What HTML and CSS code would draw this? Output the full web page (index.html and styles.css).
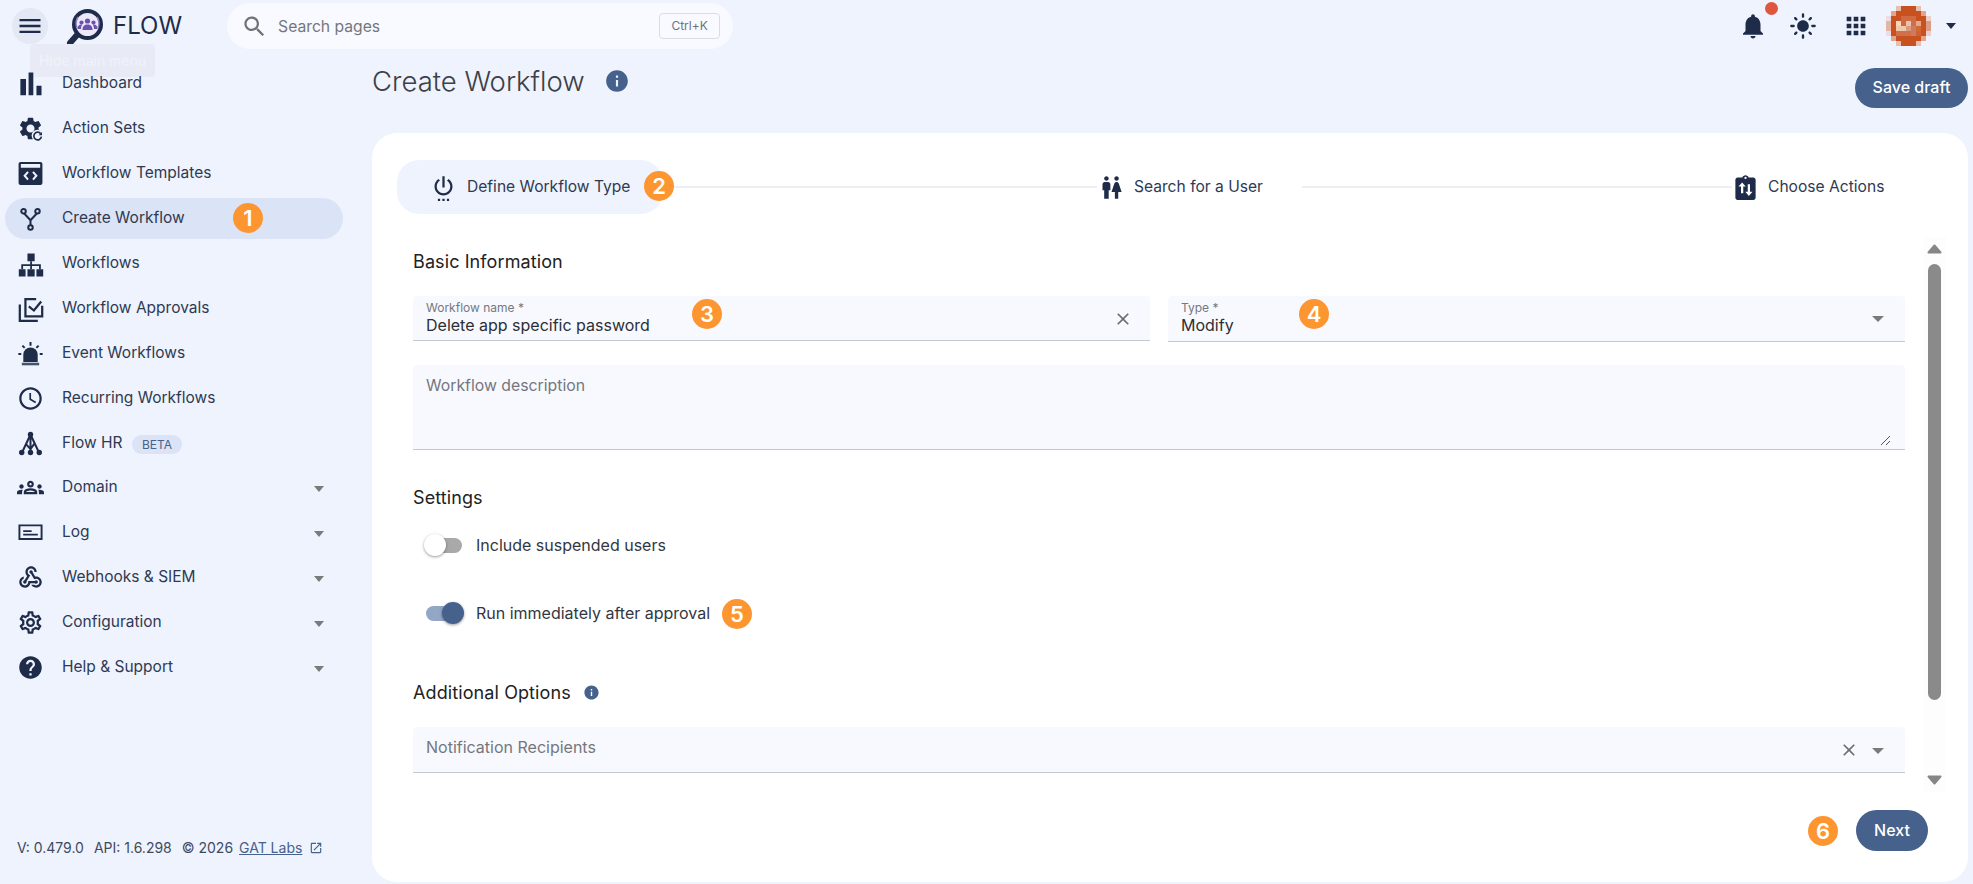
FILE: index.html
```html
<!DOCTYPE html>
<html lang="en">
<head>
<meta charset="utf-8">
<title>Create Workflow</title>
<link rel="stylesheet" href="styles.css">
</head>
<body>
<header class="topbar">
  <button class="menu-btn"><svg class="ic28" viewBox="0 0 24 24"><path d="M3 18h18v-2H3v2zm0-5h18v-2H3v2zm0-7v2h18V6H3z"/></svg></button>
  <div class="tooltip">Hide main menu</div>
  <svg class="logo" viewBox="0 0 44 44">
    <circle cx="23.5" cy="22.5" r="13.5" fill="#ece8f8" stroke="#1f2c49" stroke-width="4"/>
    <path d="M13 33l-7 8" stroke="#1f2c49" stroke-width="6" stroke-linecap="round" fill="none"/>
    <g fill="#6a52ad"><circle cx="23.5" cy="19" r="2.6"/><circle cx="17.5" cy="20.5" r="2.1"/><circle cx="29.5" cy="20.5" r="2.1"/><path d="M18.5 28c0-4 2-5.500 5-5.500s5 1.500 5 5.500z"/><path d="M13.500 27c0-3 1.500-4.500 3.500-4.500.6 0 1 .1 1.300.3-.8 1-1.300 2.400-1.300 4.200zM33.500 27c0-3-1.500-4.500-3.500-4.500-.6 0-1 .1-1.300.3.800 1 1.300 2.400 1.300 4.200z"/></g>
    <path d="M14 15a12 12 0 0 0-1 11M33 15a12 12 0 0 1 1 11" stroke="#8f7cc8" stroke-width="1.500" fill="none"/>
  </svg>
  <span class="brand">FLOW</span>
  <div class="search">
    <svg class="ic27 grey" viewBox="0 0 24 24"><path d="M15.5 14h-.79l-.28-.27C15.41 12.59 16 11.11 16 9.500 16 5.910 13.090 3 9.500 3S3 5.910 3 9.500 5.910 16 9.500 16c1.610 0 3.090-.59 4.230-1.570l.27.28v.79l5 4.990L20.490 19l-4.990-5zm-6 0C7.010 14 5 11.990 5 9.500S7.010 5 9.500 5 14 7.010 14 9.500 11.990 14 9.500 14z"/></svg>
    <span class="search-text">Search pages</span>
    <kbd class="kbd">Ctrl+K</kbd>
  </div>
  <div class="top-actions">
    <span class="bell">
      <svg class="ic30" viewBox="0 0 24 24"><path d="M12 22c1.100 0 2-.9 2-2h-4c0 1.100.9 2 2 2zm6-6v-5c0-3.070-1.640-5.640-4.500-6.320V4c0-.83-.67-1.500-1.500-1.500s-1.500.67-1.500 1.500v.68C7.630 5.360 6 7.920 6 11v5l-2 2v1h16v-1l-2-2z"/></svg>
      <i class="dot"></i>
    </span>
    <svg class="ic28 sun" viewBox="0 0 24 24"><path d="M12 7c-2.760 0-5 2.240-5 5s2.240 5 5 5 5-2.240 5-5-2.240-5-5-5zM2 13h2c.55 0 1-.45 1-1s-.45-1-1-1H2c-.55 0-1 .45-1 1s.45 1 1 1zm18 0h2c.55 0 1-.45 1-1s-.45-1-1-1h-2c-.55 0-1 .45-1 1s.45 1 1 1zM11 2v2c0 .55.45 1 1 1s1-.45 1-1V2c0-.55-.45-1-1-1s-1 .45-1 1zm0 18v2c0 .55.45 1 1 1s1-.45 1-1v-2c0-.55-.45-1-1-1s-1 .45-1 1zM5.990 4.580c-.39-.39-1.030-.39-1.410 0-.39.39-.39 1.030 0 1.410l1.060 1.060c.39.39 1.030.39 1.410 0s.39-1.030 0-1.410L5.990 4.580zm12.370 12.370c-.39-.39-1.030-.39-1.410 0-.39.39-.39 1.030 0 1.410l1.060 1.060c.39.39 1.030.39 1.410 0 .39-.39.39-1.030 0-1.410l-1.060-1.060zm1.060-10.960c.39-.39.39-1.030 0-1.410-.39-.39-1.030-.39-1.410 0l-1.060 1.060c-.39.39-.39 1.030 0 1.410s1.030.39 1.410 0l1.060-1.060zM7.050 18.360c.39-.39.39-1.030 0-1.410-.39-.39-1.030-.39-1.410 0l-1.060 1.060c-.39.39-.39 1.030 0 1.410s1.030.39 1.410 0l1.060-1.060z"/></svg>
    <svg class="ic28 apps" viewBox="0 0 24 24"><path d="M4 8h4V4H4v4zm6 12h4v-4h-4v4zm-6 0h4v-4H4v4zm0-6h4v-4H4v4zm6 0h4v-4h-4v4zm6-10v4h4V4h-4zm-6 4h4V4h-4v4zm6 6h4v-4h-4v4zm0 6h4v-4h-4v4z"/></svg>
    <svg class="avatar" viewBox="0 0 9 8" shape-rendering="crispEdges">
      <g fill="#c8511f">
        <rect x="3" y="0" width="3" height="1"/><rect x="2" y="1" width="5" height="1"/><rect x="1" y="2" width="7" height="1"/><rect x="1" y="3" width="7" height="1"/><rect x="1" y="4" width="7" height="1"/><rect x="1" y="5" width="7" height="1"/><rect x="2" y="6" width="5" height="1"/><rect x="3" y="7" width="3" height="1"/>
      </g>
      <rect x="2" y="0" width="1" height="1" fill="#e6bfb0"/><rect x="6" y="0" width="1" height="1" fill="#e6bfb0"/>
      <rect x="1" y="1" width="1" height="1" fill="#e0a58c"/><rect x="7" y="1" width="1" height="1" fill="#e0a58c"/>
      <rect x="0" y="2" width="1" height="1" fill="#ecdde4"/><rect x="8" y="2" width="1" height="1" fill="#ebcfcb"/>
      <rect x="0" y="3" width="1" height="2" fill="#e5b5a5"/><rect x="8" y="3" width="1" height="2" fill="#dc9c84"/>
      <rect x="0" y="5" width="1" height="1" fill="#ecdde4"/><rect x="8" y="5" width="1" height="1" fill="#ebcfcb"/>
      <rect x="1" y="6" width="1" height="1" fill="#e0a58c"/><rect x="7" y="6" width="1" height="1" fill="#e0a58c"/>
      <rect x="2" y="7" width="1" height="1" fill="#e6bfb0"/><rect x="6" y="7" width="1" height="1" fill="#e6bfb0"/>
      <rect x="3" y="2" width="3" height="1" fill="#cf6a42"/>
      <rect x="2" y="3" width="1" height="1" fill="#f3d6c4"/><rect x="3" y="3" width="1" height="1" fill="#ca6a40"/><rect x="4" y="3" width="1" height="1" fill="#edc2ac"/><rect x="5" y="3" width="1" height="1" fill="#c87050"/><rect x="6" y="3" width="1" height="1" fill="#e2a78e"/>
      <rect x="2" y="4" width="1" height="1" fill="#f0c8a8"/><rect x="3" y="4" width="1" height="1" fill="#eec8ae"/><rect x="4" y="4" width="1" height="1" fill="#dc9a7c"/><rect x="5" y="4" width="1" height="1" fill="#cf7a60"/><rect x="6" y="4" width="1" height="1" fill="#cf6a30"/>
      <rect x="2" y="5" width="3" height="1" fill="#d0704a"/><rect x="5" y="5" width="1" height="1" fill="#cf7a60"/><rect x="6" y="5" width="1" height="1" fill="#cc6238"/>
    </svg>
    <i class="caret-dark"></i>
  </div>
</header>

<div class="layout">
  <aside class="sidebar">
    <nav class="nav">
      <a class="nav-item"><svg class="nav-ic" viewBox="0 0 24 24"><path d="M3 8h5v14.500H3zM10.300 2.200h4.200v20.300h-4.200zM17.300 14h4.500v8.500h-4.500z"/></svg><span>Dashboard</span></a>
      <a class="nav-item"><svg class="nav-ic" viewBox="0 0 24 24"><path d="M19.140 12.940c.04-.3.06-.61.06-.94 0-.32-.02-.64-.07-.94l2.030-1.580c.18-.14.23-.41.12-.61l-1.920-3.320c-.12-.22-.37-.29-.59-.22l-2.390.96c-.5-.38-1.030-.7-1.620-.94l-.36-2.540c-.04-.24-.24-.41-.48-.41h-3.840c-.24 0-.43.17-.47.41l-.36 2.540c-.59.24-1.130.57-1.620.94l-2.390-.96c-.22-.08-.47 0-.59.22L2.740 8.870c-.12.21-.08.47.12.61l2.030 1.580c-.05.3-.09.63-.09.94s.02.64.07.94l-2.030 1.580c-.18.14-.23.41-.12.61l1.920 3.320c.12.22.37.29.59.22l2.390-.96c.5.38 1.030.7 1.620.94l.36 2.540c.05.24.24.41.48.41h3.840c.24 0 .44-.17.47-.41l.36-2.540c.59-.24 1.130-.56 1.620-.94l2.390.96c.22.08.47 0 .59-.22l1.920-3.320c.12-.22.07-.47-.12-.61l-2.010-1.580zM12 15.600c-1.980 0-3.600-1.620-3.600-3.600s1.620-3.600 3.600-3.600 3.600 1.620 3.600 3.600-1.620 3.600-3.600 3.600z"/><circle cx="18.200" cy="18.200" r="5.200" fill="#eef3fe"/><path d="M21 16.500a3.400 3.400 0 1 0 .7 2.800" fill="none" stroke="#1f2c49" stroke-width="1.500"/><path d="M22.200 15v3h-3z"/></svg><span>Action Sets</span></a>
      <a class="nav-item"><svg class="nav-ic" viewBox="0 0 24 24"><path fill-rule="evenodd" d="M3.200 1.800h17.600c1 0 1.800.8 1.800 1.800v16.800c0 1-.8 1.800-1.800 1.800H3.200c-1 0-1.800-.8-1.800-1.800V3.600c0-1 .8-1.800 1.800-1.800zM3.400 3.600v3.200h17.200V3.600z"/><path d="M9.800 10.500L6.800 14l3 3.500M14.200 10.500l3 3.500-3 3.500" fill="none" stroke="#eef3fe" stroke-width="1.800"/></svg><span>Workflow Templates</span></a>
      <a class="nav-item active"><svg class="nav-ic" viewBox="0 0 24 24"><g fill="none" stroke="#1f2c49" stroke-width="1.800"><circle cx="5.800" cy="5.500" r="2"/><circle cx="18.200" cy="5.500" r="2"/><circle cx="12" cy="20" r="2"/><path d="M6.400 7.500L12 13.500l5.600-6M12 13.500V18"/></g></svg><span>Create Workflow</span><b class="badge badge-nav">1</b></a>
      <a class="nav-item"><svg class="nav-ic" viewBox="0 0 24 24"><path d="M9.300 3h6.400v7h-6.400zM1.600 17h6v6.500h-6zM9.300 17h6.400v6.500H9.300zM17.300 17h6v6.500h-6z"/><path d="M12.500 10v7M4.600 17v-3.500h15.800V17" fill="none" stroke="#1f2c49" stroke-width="1.600"/></svg><span>Workflows</span></a>
      <a class="nav-item"><svg class="nav-ic" viewBox="0 0 24 24"><g fill="none" stroke="#1f2c49" stroke-width="2"><path d="M17 3.700H7.500V19H22.400V9.500"/><path d="M10.500 10.200L15 13.800L21.500 5.800"/><path d="M2.500 8.400V23H18.500"/></g></svg><span>Workflow Approvals</span></a>
      <a class="nav-item"><svg class="nav-ic" viewBox="0 0 24 24"><path d="M5.600 19.500V13a6.400 6.400 0 0 1 12.800 0v6.500z"/><path d="M4.300 20.200h15.400v2.300H4.300z" fill="#45536f"/><path d="M12 1.800v3.400M4.800 5l2 2M19.200 5l-2 2M1.200 12.500h2.600M20.200 12.500h2.600" fill="none" stroke="#1f2c49" stroke-width="1.800"/></svg><span>Event Workflows</span></a>
      <a class="nav-item"><svg class="nav-ic" viewBox="0 0 24 24"><path d="M11.990 2C6.470 2 2 6.480 2 12s4.470 10 9.990 10C17.520 22 22 17.520 22 12S17.520 2 11.990 2zM12 20c-4.420 0-8-3.580-8-8s3.580-8 8-8 8 3.580 8 8-3.580 8-8 8zm.5-13H11v6l5.250 3.150.75-1.230-4.500-2.670z"/></svg><span>Recurring Workflows</span></a>
      <a class="nav-item"><svg class="nav-ic" viewBox="0 0 24 24"><g fill="none" stroke="#1f2c49" stroke-width="1.800"><path d="M12 4L4.500 20M12 4v16M12 4l7.500 16M8 12.500L12 17M15.500 12l-3.500 5"/></g><circle cx="12" cy="4" r="2.400"/><circle cx="4.200" cy="20" r="2.400"/><circle cx="12" cy="20" r="2.400"/><circle cx="19.800" cy="20" r="2.400"/></svg><span>Flow HR</span><em class="beta">BETA</em></a>
      <a class="nav-item expand first-expand"><svg class="nav-ic" viewBox="0 0 24 24"><path d="M4 13c1.100 0 2-.9 2-2s-.9-2-2-2-2 .9-2 2 .9 2 2 2zm1.130 1.100c-.37-.06-.74-.1-1.130-.1-.99 0-1.930.21-2.780.58C.48 14.900 0 15.620 0 16.430V18h4.500v-1.610c0-.83.23-1.610.63-2.290zM20 13c1.100 0 2-.9 2-2s-.9-2-2-2-2 .9-2 2 .9 2 2 2zm4 3.430c0-.81-.48-1.530-1.220-1.850-.85-.37-1.790-.58-2.780-.58-.39 0-.76.04-1.130.1.4.68.63 1.460.63 2.290V18H24v-1.570zm-7.760-2.780c-1.170-.52-2.610-.9-4.240-.9-1.630 0-3.070.39-4.240.9C6.680 14.130 6 15.210 6 16.390V18h12v-1.610c0-1.180-.68-2.260-1.760-2.740zM8.070 16c.09-.23.13-.39.91-.69.970-.38 1.990-.56 3.020-.56s2.050.18 3.020.56c.77.3.81.46.91.69H8.070zM12 8c.55 0 1 .45 1 1s-.45 1-1 1-1-.45-1-1 .45-1 1-1m0-2c-1.660 0-3 1.340-3 3s1.340 3 3 3 3-1.340 3-3-1.340-3-3-3z"/></svg><span>Domain</span><i class="caret"></i></a>
      <a class="nav-item expand"><svg class="nav-ic" viewBox="0 0 24 24"><path fill-rule="evenodd" d="M1.300 4.800h21.400v13.800H1.300zM3 6.500v10.400h18V6.500z"/><path d="M5.500 10h7.500v1.600H5.500zM5.500 13h13v1.600h-13z"/></svg><span>Log</span><i class="caret"></i></a>
      <a class="nav-item expand"><svg class="nav-ic" viewBox="0 0 24 24"><path d="M10 15h5.880c.27-.31.67-.5 1.120-.5.830 0 1.500.67 1.500 1.500s-.67 1.500-1.500 1.500c-.44 0-.84-.19-1.120-.5H11.900c-.46 2.280-2.480 4-4.900 4-2.760 0-5-2.240-5-5 0-2.420 1.720-4.440 4-4.900v2.070c-1.160.41-2 1.530-2 2.830 0 1.650 1.350 3 3 3s3-1.350 3-3v-2zm2.500-11c1.650 0 3 1.350 3 3h2c0-2.760-2.240-5-5-5s-5 2.240-5 5c0 1.430.6 2.710 1.550 3.620l-2.350 3.900c-.68.14-1.200.75-1.200 1.480 0 .83.67 1.500 1.500 1.500s1.500-.67 1.500-1.500c0-.16-.02-.31-.07-.45l3.380-5.630C10.490 9.610 9.500 8.420 9.500 7c0-1.650 1.350-3 3-3zm4.500 9c-.64 0-1.230.2-1.720.54l-3.050-5.070C11.530 8.350 11 7.740 11 7c0-.83.67-1.500 1.500-1.500S14 6.170 14 7c0 .15-.02.29-.06.43l2.190 3.650c.28-.05.57-.08.87-.08 2.760 0 5 2.240 5 5s-2.240 5-5 5c-1.850 0-3.470-1.010-4.330-2.500h2.670c.48.32 1.050.5 1.660.5 1.650 0 3-1.350 3-3s-1.350-3-3-3z"/></svg><span>Webhooks &amp; SIEM</span><i class="caret"></i></a>
      <a class="nav-item expand"><svg class="nav-ic" viewBox="0 0 24 24"><path d="M19.430 12.980c.04-.32.07-.64.07-.98 0-.34-.03-.66-.07-.98l2.110-1.650c.19-.15.24-.42.12-.64l-2-3.460c-.09-.16-.26-.25-.44-.25-.06 0-.12.01-.17.03l-2.490 1c-.52-.4-1.080-.73-1.690-.98l-.38-2.650C14.460 2.180 14.250 2 14 2h-4c-.25 0-.46.18-.49.42l-.38 2.650c-.61.25-1.170.59-1.690.98l-2.490-1c-.06-.02-.12-.03-.18-.03-.17 0-.34.09-.43.25l-2 3.460c-.13.22-.07.49.12.64l2.110 1.650c-.04.32-.07.65-.07.98 0 .33.03.66.07.98l-2.110 1.650c-.19.15-.24.42-.12.64l2 3.460c.09.16.26.25.44.25.06 0 .12-.01.17-.03l2.490-1c.52.4 1.080.73 1.690.98l.38 2.650c.03.24.24.42.49.42h4c.25 0 .46-.18.49-.42l.38-2.650c.61-.25 1.170-.59 1.690-.98l2.490 1c.06.02.12.03.18.03.17 0 .34-.09.43-.25l2-3.460c.12-.22.07-.49-.12-.64l-2.110-1.650zm-1.980-1.710c.04.31.05.52.05.73 0 .21-.02.43-.05.73l-.14 1.130.89.7 1.080.84-.7 1.210-1.270-.51-1.040-.42-.9.68c-.43.32-.84.56-1.250.73l-1.060.43-.16 1.130-.2 1.350h-1.400l-.19-1.350-.16-1.130-1.060-.43c-.43-.18-.83-.41-1.230-.71l-.91-.7-1.060.43-1.270.51-.7-1.210 1.080-.84.89-.7-.14-1.130c-.03-.31-.05-.54-.05-.74s.02-.43.05-.73l.14-1.130-.89-.7-1.080-.84.7-1.210 1.270.51 1.040.42.9-.68c.43-.32.84-.56 1.250-.73l1.060-.43.16-1.130.2-1.350h1.390l.19 1.350.16 1.130 1.060.43c.43.18.83.41 1.230.71l.91.7 1.060-.43 1.270-.51.7 1.210-1.070.85-.89.7.14 1.130zM12 8c-2.210 0-4 1.790-4 4s1.790 4 4 4 4-1.790 4-4-1.790-4-4-4zm0 6c-1.100 0-2-.9-2-2s.9-2 2-2 2 .9 2 2-.9 2-2 2z"/></svg><span>Configuration</span><i class="caret"></i></a>
      <a class="nav-item expand"><svg class="nav-ic" viewBox="0 0 24 24"><path d="M12 2C6.480 2 2 6.480 2 12s4.480 10 10 10 10-4.480 10-10S17.520 2 12 2zm1 17h-2v-2h2v2zm2.070-7.750l-.9.920C13.450 12.900 13 13.500 13 15h-2v-.5c0-1.100.45-2.100 1.170-2.830l1.240-1.260c.37-.36.59-.86.59-1.410 0-1.100-.9-2-2-2s-2 .9-2 2H8c0-2.210 1.790-4 4-4s4 1.790 4 4c0 .88-.36 1.680-.93 2.250z"/></svg><span>Help &amp; Support</span><i class="caret"></i></a>
    </nav>
    <footer class="version">
      <span class="ver-part">V: 0.479.0</span><span class="ver-part">API: 1.6.298</span><span class="ver-copy">© 2026 </span><a class="ver-link">GAT Labs</a>
      <svg class="ext" viewBox="0 0 24 24"><path d="M19 19H5V5h7V3H5c-1.110 0-2 .9-2 2v14c0 1.100.89 2 2 2h14c1.100 0 2-.9 2-2v-7h-2v7zM14 3v2h3.590l-9.830 9.830 1.410 1.410L19 6.410V10h2V3h-7z"/></svg>
    </footer>
  </aside>

  <main class="content">
    <div class="title-row">
      <h1 class="title">Create Workflow</h1>
      <svg class="title-info" viewBox="0 0 24 24"><path d="M12 2C6.480 2 2 6.480 2 12s4.480 10 10 10 10-4.480 10-10S17.520 2 12 2zm1 15h-2v-6h2v6zm0-8h-2V7h2v2z"/></svg>
      <button class="btn save">Save draft</button>
    </div>
    <section class="card">
      <div class="stepper">
        <div class="step step-active">
          <svg class="ic27" viewBox="0 0 24 24"><path d="M7 24h2v-2H7v2zm4 0h2v-2h-2v2zm2-22h-2v10h2V2zm3.560 2.440-1.450 1.450C16.840 6.940 18 8.830 18 11c0 3.310-2.690 6-6 6s-6-2.690-6-6c0-2.170 1.160-4.060 2.880-5.120L7.440 4.440C5.360 5.880 4 8.280 4 11c0 4.420 3.580 8 8 8s8-3.580 8-8c0-2.720-1.360-5.120-3.440-6.560zM15 24h2v-2h-2v2z"/></svg>
          <span>Define Workflow Type</span>
          <b class="badge badge-step">2</b>
        </div>
        <i class="connector conn-a"></i>
        <div class="step step-mid">
          <svg class="ic27" viewBox="0 0 24 24"><path d="M5.500 22v-7.500H4V9c0-1.100.9-2 2-2h3c1.100 0 2 .9 2 2v5.500H9.500V22h-4zM18 22v-6h3l-2.540-7.630C18.180 7.550 17.420 7 16.560 7h-.12c-.86 0-1.630.55-1.900 1.370L12 16h3v6h3zM7.500 6c1.110 0 2-.89 2-2s-.89-2-2-2-2 .89-2 2 .89 2 2 2zm9 0c1.110 0 2-.89 2-2s-.89-2-2-2-2 .89-2 2 .89 2 2 2z"/></svg>
          <span>Search for a User</span>
        </div>
        <i class="connector conn-b"></i>
        <div class="step step-last">
          <svg class="ic27" viewBox="0 0 24 24"><path d="M19 3h-4.180C14.400 1.840 13.300 1 12 1s-2.400.84-2.820 2H5c-1.100 0-2 .9-2 2v16c0 1.100.9 2 2 2h14c1.100 0 2-.9 2-2V5c0-1.100-.9-2-2-2z"/><circle cx="12" cy="3.500" r="1" fill="#fff"/><path d="M9 7.500L5.800 11.200h2.200V17h2v-5.800h2.200zM14 9v6.800h-2.200l3.200 3.700 3.200-3.700H16V9z" fill="#fff"/></svg>
          <span>Choose Actions</span>
        </div>
      </div>

      <div class="scroll-area">
        <form class="form">
          <h2 class="section">Basic Information</h2>
          <div class="row">
            <div class="field">
              <label class="float">Workflow name *</label>
              <div class="value">Delete app specific password</div>
              <svg class="field-x" viewBox="0 0 24 24"><path d="M19 6.410 17.590 5 12 10.590 6.410 5 5 6.410 10.590 12 5 17.590 6.410 19 12 13.410 17.590 19 19 17.590 13.410 12 19 6.410z"/></svg>
              <b class="badge badge-name">3</b>
            </div>
            <div class="field field-tall">
              <label class="float">Type *</label>
              <div class="value">Modify</div>
              <i class="caret field-caret"></i>
              <b class="badge badge-type">4</b>
            </div>
          </div>
          <div class="field area">
            <span class="placeholder">Workflow description</span>
            <svg class="resize" viewBox="0 0 12 12"><path d="M11 2L2 11M11 7L7 11" stroke="#555" stroke-width="1" fill="none"/></svg>
          </div>

          <h2 class="section section-settings">Settings</h2>
          <div class="toggle-row">
            <span class="switch"><i class="track"></i><i class="thumb"></i></span>
            <span>Include suspended users</span>
          </div>
          <div class="toggle-row toggle-row-on">
            <span class="switch on"><i class="track"></i><i class="thumb"></i></span>
            <span>Run immediately after approval</span>
            <b class="badge badge-run">5</b>
          </div>

          <h2 class="section section-extra">Additional Options
            <svg class="mini-info" viewBox="0 0 24 24"><path d="M12 2C6.480 2 2 6.480 2 12s4.480 10 10 10 10-4.480 10-10S17.520 2 12 2zm1 15h-2v-6h2v6zm0-8h-2V7h2v2z"/></svg>
          </h2>
          <div class="field notify">
            <span class="placeholder">Notification Recipients</span>
            <svg class="field-x" viewBox="0 0 24 24"><path d="M19 6.410 17.590 5 12 10.590 6.410 5 5 6.410 10.590 12 5 17.590 6.410 19 12 13.410 17.590 19 19 17.590 13.410 12 19 6.410z"/></svg>
            <i class="caret field-caret"></i>
          </div>
        </form>
        <div class="scrollbar">
          <svg class="sb-arrow sb-up" viewBox="0 0 15 10"><path d="M7.500 1.500L13.500 8.500H1.500z" stroke="#868686" stroke-width="2" stroke-linejoin="round"/></svg>
          <i class="sb-thumb"></i>
          <svg class="sb-arrow sb-down" viewBox="0 0 15 10"><path d="M1.500 1.500H13.500L7.500 8.500z" stroke="#868686" stroke-width="2" stroke-linejoin="round"/></svg>
        </div>
      </div>

      <div class="card-foot">
        <b class="badge badge-next">6</b>
        <button class="btn next">Next</button>
      </div>
    </section>
  </main>
</div>
</body>
</html>
```

FILE: styles.css
```css
* { box-sizing: border-box; }
html, body { margin: 0; height: 884px; overflow: hidden; }
body { background: #eef3fe; font-family: Inter, "Noto Sans", sans-serif; font-size: 16px; color: #2e3a52; }
svg { fill: #1f2c49; display: block; flex: none; }
.ic27 { width: 27px; height: 27px; }
.ic28 { width: 28px; height: 28px; }
.ic30 { width: 30px; height: 30px; }
.grey { fill: #6f7278; }

/* top bar */
.topbar { position: relative; display: flex; align-items: center; height: 52px; padding: 0 17px 0 12px; }
.menu-btn { width: 36px; height: 36px; border: 0; border-radius: 50%; background: #e3e8f4; padding: 4px; }
.tooltip { position: absolute; left: 30px; top: 44px; width: 125px; height: 33px; border-radius: 4px; background: #e8ebf6; color: #f0f2fa; font-size: 14px; line-height: 33px; text-align: center; }
.logo { width: 44px; height: 44px; margin-left: 16px; margin-top: -4px; }
.brand { margin-left: 5px; font-size: 24px; color: #1f2c49; line-height: 1; }
.search { display: flex; align-items: center; width: 506px; height: 46px; margin-left: 45px; padding: 0 13px 0 14px; border-radius: 23px; background: #f8faff; }
.search-text { margin-left: 10px; font-size: 15.700px; color: #74777d; }
.kbd { margin-left: auto; height: 26px; width: 61px; border: 1px solid #d9dce4; border-radius: 4px; font: 12px/24px Inter, sans-serif; color: #6f7278; text-align: center; }
.top-actions { display: flex; align-items: center; margin-left: auto; }
.bell { position: relative; display: block; }
.dot { position: absolute; left: 27px; top: -9px; width: 13px; height: 13px; border-radius: 50%; background: #e0563c; }
.sun { margin-left: 21px; }
.apps { margin-left: 25px; }
.avatar { width: 45px; height: 40px; margin-left: 16px; }
.caret-dark { width: 0; height: 0; margin-left: 15px; border: 5.5px solid transparent; border-top: 6px solid #1f2c49; border-bottom: 0; }

/* layout */
.layout { position: relative; display: flex; height: 832px; }
.sidebar { display: flex; flex-direction: column; flex: none; width: 372px; padding-top: 11px; }
.nav { display: flex; flex-direction: column; gap: 4px; }
.nav-item { position: relative; display: flex; align-items: center; height: 41px; margin: 0 29px 0 5px; padding: 0 14px 0 12px; border-radius: 21px; font-size: 15.500px; color: #2e3a52; }
.nav-item > span { margin-left: 18px; padding-bottom: 3px; }
.nav-ic { width: 27px; height: 27px; }
.active { background: #dbe3f6; }
.first-expand { margin-top: -1px; }
.expand > span { padding-bottom: 2px; }
.beta { margin-left: 10px; padding: 0 9.500px; height: 19px; font: 12px/19px Inter, sans-serif; color: #45618c; background: #dbe3f6; border-radius: 10px; margin-top: 1px; }
.caret { width: 0; height: 0; border: 5.5px solid transparent; border-top: 6px solid #7a7a7a; border-bottom: 0; }
.expand .caret { margin-left: auto; margin-top: 2px; margin-right: 5px; }
.version { display: flex; align-items: center; margin-top: auto; padding: 0 0 28px 17px; font-size: 14px; color: #3f4a60; white-space: pre; }
.ver-part { margin-right: 10px; }
.ver-copy { margin-right: 2px; }
.ver-link { color: #45618c; text-decoration: underline; }
.ext { width: 14px; height: 14px; margin-left: 7px; fill: #45618c; }

/* badges */
.badge { position: absolute; width: 30px; height: 30px; border-radius: 50%; background: #fd9530; color: #fff; font: 600 22px/30px Inter, sans-serif; text-align: center; z-index: 2; }
.badge-nav { left: 228px; top: 5px; }
.badge-step { right: -11px; top: 11px; }
.badge-name { left: 279px; top: 3px; }
.badge-type { left: 131px; top: 3px; }
.badge-run { left: 309px; top: 7px; }
.badge-next { position: static; }

/* content */
.content { display: flex; flex-direction: column; flex: 1; min-width: 0; padding: 0 5px 2px 0; }
.title-row { display: flex; align-items: flex-start; height: 81px; flex: none; }
.title { margin: 12px 0 0; font-size: 27.500px; font-weight: 300; line-height: 34px; color: #3c4048; }
.title-info { width: 26px; height: 26px; margin: 16px 0 0 19px; fill: #45618c; }
.btn { border: 0; background: #45618c; color: #fff; font: 500 16px Inter, sans-serif; border-radius: 21px; padding: 0 0 2px; }
.save { width: 113px; height: 40px; margin: 16px 0 0 auto; }
.card { display: flex; flex-direction: column; flex: 1; min-height: 0; padding: 27px 22px 0 25px; background: #fff; border-radius: 25px; }

/* stepper */
.stepper { display: flex; align-items: center; height: 54px; flex: none; margin-right: 29px; }
.step { display: flex; align-items: center; gap: 9px; height: 54px; font-size: 15.600px; color: #2e3a52; flex: none; }
.step > span { padding-bottom: 2px; }
.step-active { position: relative; width: 266px; padding: 0 0 0 33px; gap: 10px; background: #eef3fe; border-radius: 22px; }
.step-mid { padding: 0 39px 0 1px; }
.connector { height: 2px; background: #eeeff2; flex: none; }
.conn-a { width: 434px; }
.conn-b { width: 430px; }

/* form */
.scroll-area { display: flex; height: 555px; margin-top: 23px; flex: none; }
.form { flex: 1; min-width: 0; padding: 12px 0 0 16px; overflow: hidden; }
.section { display: flex; align-items: center; height: 24px; margin: 0; font-size: 18px; font-weight: 400; letter-spacing: .1px; color: #222; }
.section-settings { margin-top: 35px; }
.section-extra { margin-top: 46px; }
.mini-info { width: 17px; height: 17px; margin-left: 12px; fill: #45618c; }
.row { display: flex; gap: 18px; align-items: flex-start; margin-top: 23px; }
.field { position: relative; flex: 1; height: 45px; padding: 4px 13px 0; background: #f8f9fe; border-bottom: 1px solid #c6c8cf; border-radius: 4px 4px 0 0; }
.field-tall { height: 46px; }
.float { display: block; font-size: 12px; line-height: 15px; color: #75787e; }
.value { font-size: 16px; line-height: 20px; color: #2b2f36; }
.field-x { position: absolute; right: 17px; top: 13px; width: 20px; height: 20px; fill: #6b6e74; }
.field-caret { position: absolute; right: 21px; top: 20px; border-width: 6px; border-top-width: 6px; }
.area { height: 85px; margin-top: 23px; padding-top: 10px; }
.placeholder { color: #74777d; font-size: 16px; line-height: 22px; }
.area .placeholder { font-size: 15.800px; }
.resize { position: absolute; right: 14px; bottom: 3px; width: 12px; height: 12px; }
.notify { height: 46px; margin-top: 23px; flex: none; padding-top: 9px; }
.notify .field-x { right: 46px; top: 13px; }
.notify .field-caret { right: 21px; top: 21px; }

/* toggles */
.toggle-row { position: relative; display: flex; align-items: center; gap: 12px; height: 42px; margin-top: 15px; padding-left: 11px; color: #33373f; }
.toggle-row-on { margin-top: 26px; }
.switch { position: relative; display: block; width: 40px; height: 22px; flex: none; }
.track { position: absolute; left: 2px; right: 2px; top: 3.500px; height: 15px; border-radius: 8px; background: #a9a9a9; }
.thumb { position: absolute; left: 0; top: 0; width: 22px; height: 22px; border-radius: 50%; background: #fff; box-shadow: 0 1px 3px rgba(0,0,0,.4); }
.on .track { background: #92a6c5; }
.on .thumb { left: 18px; background: #45618c; }

/* scrollbar */
.scrollbar { display: flex; flex-direction: column; align-items: center; flex: none; width: 23px; margin-left: 18px; background: #fdfdfd; }
.sb-arrow { width: 15px; height: 10px; fill: #868686; }
.sb-up { margin-top: 7px; }
.sb-thumb { width: 13px; height: 436px; margin-top: 10px; border-radius: 7px; background: #8a8a8a; }
.sb-down { margin-top: auto; margin-bottom: 7px; }

.card-foot { display: flex; align-items: center; justify-content: flex-end; gap: 18px; margin: 18px 18px 0 0; }
.next { width: 72px; height: 41px; }
```
